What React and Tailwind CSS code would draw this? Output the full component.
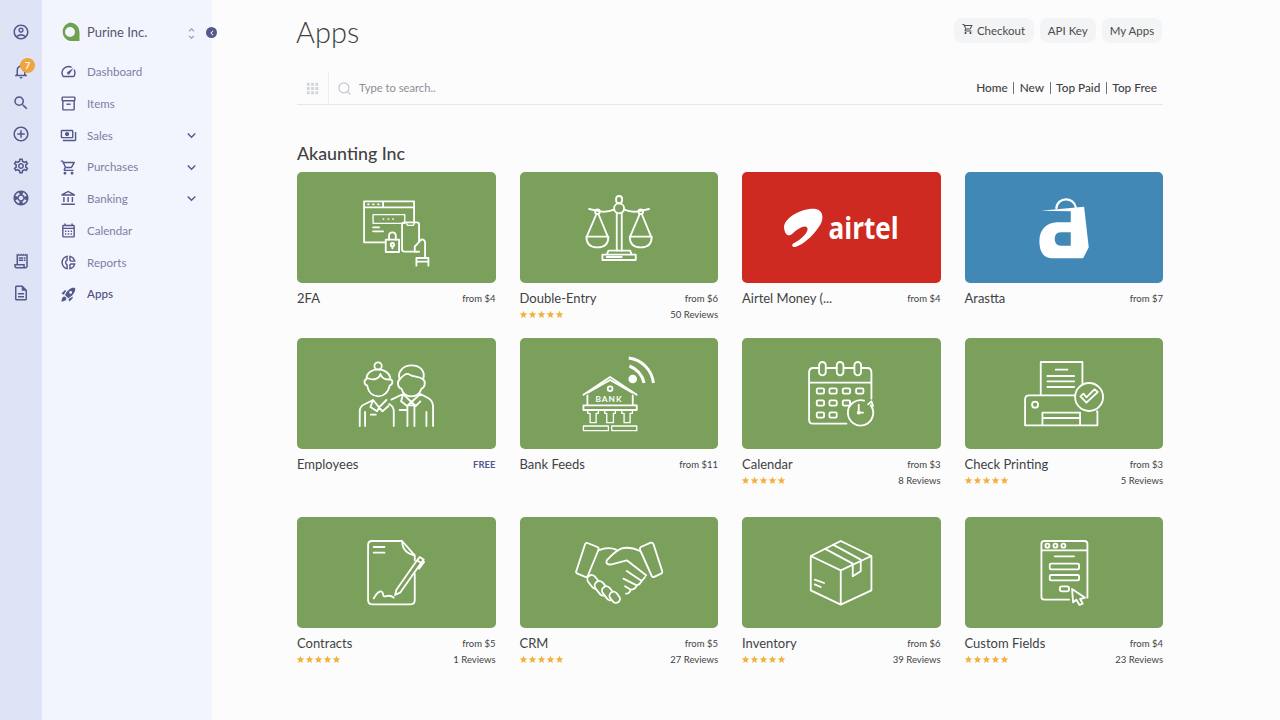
import {
  MdOutlineAccountCircle,
  MdOutlineNotifications,
  MdSearch,
  MdAddCircleOutline,
  MdOutlineSettings,
  MdOutlineSupport,
  MdOutlineReceiptLong,
  MdOutlineDescription,
  MdOutlineSpeed,
  MdOutlineInventory2,
  MdOutlinePayments,
  MdOutlineShoppingCart,
  MdOutlineAccountBalance,
  MdOutlineCalendarMonth,
  MdOutlineDonutSmall,
  MdRocketLaunch,
  MdExpandMore,
  MdChevronLeft,
  MdUnfoldMore,
  MdApps,
  MdStar,
} from "react-icons/md";
import { LuSearch } from "react-icons/lu";

const GREEN = "#7aa05c";

const railTop = [MdOutlineNotifications, MdSearch, MdAddCircleOutline, MdOutlineSettings, MdOutlineSupport];
const railBottom = [MdOutlineReceiptLong, MdOutlineDescription];

const navItems = [
  { label: "Dashboard", icon: MdOutlineSpeed },
  { label: "Items", icon: MdOutlineInventory2 },
  { label: "Sales", icon: MdOutlinePayments, more: true },
  { label: "Purchases", icon: MdOutlineShoppingCart, more: true },
  { label: "Banking", icon: MdOutlineAccountBalance, more: true },
  { label: "Calendar", icon: MdOutlineCalendarMonth },
  { label: "Reports", icon: MdOutlineDonutSmall },
  { label: "Apps", icon: MdRocketLaunch, active: true },
];

// every drawing uses the same 595x333 box, with its own origin
const Art = ({ box, children }) => (
  <svg
    viewBox={box}
    className="w-full h-full"
    fill="none"
    stroke="#fff"
    strokeWidth="5.5"
    strokeLinecap="round"
    strokeLinejoin="round"
  >
    {children}
  </svg>
);

const TwoFactor = () => (
  <Art box="22 4 595 333">
    <path d="M285 215H223V92H373V155M223 110H373M280 92V110" />
    <path d="M235 101h2M250 101h2M265 101h2" />
    <path d="M250 132H345V158H250ZM280 145h2M295 145h2M309 145h2" strokeWidth="4" />
    <path d="M250 170H268M250 182H280" />
    <rect x="337" y="155" width="51" height="88" rx="7" />
    <path d="M350 157l3 7h18l3-7" strokeWidth="4" />
    <path d="M298 207V194q0-9 10-9q10 0 10 9V207" />
    <rect x="288" y="207" width="40" height="37" />
    <circle cx="308" cy="222" r="5" />
    <path d="M308 227v6" />
    <path d="M388 243H375V228L395 206q11 0 11 11V262M380 262H416M380 262V285M416 262V285M380 273H416" fill={GREEN} />
  </Art>
);

const Scale = () => (
  <Art box="690 4 595 333">
    <rect x="978" y="76" width="18" height="22" rx="9" />
    <circle cx="987" cy="113" r="15" />
    <path d="M980 128V240M995 128V240" />
    <path d="M972 117Q950 126 930 122L897 115M1002 117Q1024 126 1044 122L1077 115" />
    <circle cx="922" cy="123" r="7" />
    <circle cx="1052" cy="123" r="7" />
    <path d="M919 130L890 198M925 130L953 198M1049 130L1020 198M1055 130L1083 198" />
    <path d="M889 198H955Q955 230 922 230Q889 230 889 198ZM1019 198H1085Q1085 230 1052 230Q1019 230 1019 198Z" />
    <path d="M950 252L955 240H1020L1025 252M937 252H1037V268H937ZM950 259H995" />
  </Art>
);

const Airtel = () => (
  <Art box="22 4 595 333">
    <path
      d="M148 172C145 145 195 113 238 114C268 116 270 148 250 172C232 198 205 222 182 229C170 231 170 220 178 217C205 203 222 182 218 172C213 160 190 172 172 190C160 200 150 190 148 172Z"
      fill="#fff"
      stroke="none"
    />
    <text
      x="281"
      y="206"
      fill="#fff"
      stroke="none"
      fontSize="92"
      fontWeight="700"
      textLength="211"
      lengthAdjust="spacingAndGlyphs"
      style={{ fontFamily: '"Open Sans", sans-serif' }}
    >
      airtel
    </text>
  </Art>
);

const Arastta = () => (
  <Art box="688 4 595 333">
    <path d="M962 112C965 78 1015 78 1020 110" strokeWidth="7" />
    <path
      fillRule="evenodd"
      fill="#fff"
      stroke="none"
      d="M915 120L1045 108L1059 230L1042 263H950C925 263 911 245 911 210C911 180 930 155 965 155H1005V122ZM1005 185H975C962 185 957 195 957 205C957 218 965 225 975 225H1005Z"
    />
  </Art>
);

const Employees = () => (
  <Art box="22 8 595 333">
    <circle cx="265" cy="92" r="11" />
    <path d="M232 150C222 148 222 132 230 132C230 112 248 102 265 102C285 102 302 115 302 132C310 133 310 148 300 150C296 172 280 183 266 183C250 183 236 172 232 150Z" />
    <path d="M232 128C250 136 268 132 272 116C276 128 288 134 302 132" />
    <path d="M210 272V228Q210 212 226 206L250 194L268 216L290 194M250 194L242 215L262 228L268 216L278 228L296 212M226 230V272M243 238H258M312 272V225Q310 212 298 206" />
    <path d="M335 160C325 158 320 140 330 132C322 112 338 90 365 90C392 90 408 108 400 132C410 140 404 158 395 160C390 175 378 183 365 183C352 183 340 175 335 160Z" />
    <path d="M330 132C342 118 352 112 360 118C372 126 388 122 400 132" />
    <path d="M305 193L340 176L365 200L392 176L415 188Q430 196 430 215V272M340 176L334 198L352 212L365 200L378 212L392 198M353 212V272M374 212V272M358 210L372 210M330 224H348M410 230V272" />
  </Art>
);

const BankFeeds = () => (
  <Art box="690 8 595 333">
    <circle cx="1028" cy="131" r="13" fill="#fff" stroke="none" />
    <path d="M1018 92A72 72 0 0 1 1062 143" strokeWidth="9" strokeLinecap="butt" />
    <path d="M1016 68A85 85 0 0 1 1090 143" strokeWidth="9" strokeLinecap="butt" />
    <path d="M880 178L960 125L1040 178M893 172L960 134L1027 172" />
    <circle cx="960" cy="160" r="7" />
    <text
      x="916"
      y="199"
      fill="#fff"
      stroke="none"
      fontSize="25"
      fontWeight="700"
      letterSpacing="3"
      style={{ fontFamily: '"Lato", sans-serif' }}
    >
      BANK
    </text>
    <path d="M892 180V208M1028 180V208M880 210H1040V224H880Z" />
    <path d="M893 224H925V234H918V262H900V234H893ZM944 224H976V234H970V262H950V234H944ZM995 224H1027V234H1020V262H1002V234H995Z" strokeWidth="4" />
    <path d="M880 272H955V286H880ZM965 272H1040V286H965Z" strokeWidth="4" />
  </Art>
);

const CalendarArt = () => (
  <Art box="22 8 595 333">
    <path d="M250 98H235Q223 98 223 112V253Q223 265 235 265H335M277 98H305M329 98H356M383 98H398Q410 98 410 112V190M223 142H410" />
    <rect x="253" y="80" width="20" height="40" rx="10" />
    <rect x="306" y="80" width="20" height="40" rx="10" />
    <rect x="359" y="80" width="20" height="40" rx="10" />
    {[257, 295, 335, 375].map((x) => (
      <rect key={x} x={x - 11} y="159" width="22" height="16" rx="4" />
    ))}
    {[257, 295, 335].map((x) => (
      <rect key={x} x={x - 11} y="195" width="22" height="16" rx="4" />
    ))}
    {[257, 295].map((x) => (
      <rect key={x} x={x - 11} y="231" width="22" height="16" rx="4" />
    ))}
    <path d="M408 210A38 38 0 1 1 388 196" fill={GREEN} />
    <path d="M400 207L410 198L415 212M372 208V232H385" />
    <circle cx="372" cy="232" r="3" fill="#fff" />
  </Art>
);

const CheckPrinting = () => (
  <Art box="688 8 595 333">
    <path d="M915 178V80H1040V150M1040 80V98" />
    <path d="M960 103H995M935 122H1015M935 138H1015M935 155H1015" />
    <path d="M1016 180H880Q868 180 868 192V270H1085V228H1083" />
    <circle cx="898" cy="208" r="9" />
    <path d="M920 270V232H1033V270M925 248H1030" />
    <circle cx="1060" cy="185" r="42" fill={GREEN} />
    <path d="M1034 183L1052 202L1086 170L1076 162L1052 186L1043 175Z" />
  </Art>
);

const Contracts = () => (
  <Art box="22 20 595 333">
    <path d="M337 92H247Q235 92 235 104V270Q235 282 247 282H363Q375 282 375 270V190M375 150V135L337 92Q338 128 375 135" />
    <path d="M252 110H284M252 127H284" />
    <path d="M252 264C265 240 278 238 280 252C282 268 295 246 312 262" />
    <path d="M316 254L320 238L382 150L394 158L332 246ZM382 150L390 140L402 148L394 158M388 175L403 155" />
  </Art>
);

const Handshake = () => (
  <Art box="690 20 595 333">
    <path d="M892 98L922 110Q928 113 925 119L893 197Q890 202 884 199L862 190Q856 187 859 181L885 102Q887 96 892 98Z" />
    <path d="M1082 97L1052 110Q1048 113 1050 119L1085 197Q1088 202 1094 199L1113 190Q1118 187 1116 181L1090 101Q1087 96 1082 97Z" />
    <path d="M925 120Q955 108 978 118M1050 122Q1020 108 995 114Q975 122 950 150Q945 165 965 162L1010 150L1068 195" />
    <path d="M1065 200L1055 212L1010 182M1055 212Q1050 222 1040 225L1000 205M1040 225Q1035 238 1022 238L1005 228M1022 238Q1018 250 1008 250" />
    <g fill={GREEN}>
      <rect x="898" y="192" width="26" height="46" rx="13" transform="rotate(-38 911 215)" />
      <rect x="920" y="210" width="28" height="48" rx="14" transform="rotate(-38 934 234)" />
      <rect x="942" y="226" width="26" height="46" rx="13" transform="rotate(-38 955 249)" />
      <rect x="962" y="243" width="24" height="36" rx="12" transform="rotate(-38 974 261)" />
    </g>
  </Art>
);

const Inventory = () => (
  <Art box="22 20 595 333">
    <path d="M318 92L410 137V240L318 283L228 240V137ZM228 137L318 180L410 137M318 180V283" />
    <path d="M270 115L354 160V198L378 183V148L295 103" />
    <path d="M240 208L268 218M240 222L258 230" />
  </Art>
);

const CustomFields = () => (
  <Art box="688 20 595 333">
    <path d="M1000 268H926Q917 268 917 260V100Q917 92 926 92H1046Q1055 92 1055 100V262M917 120H1055" />
    <circle cx="935" cy="106" r="6" />
    <circle cx="959" cy="106" r="6" />
    <circle cx="983" cy="106" r="6" />
    <path d="M957 138H1015" />
    <rect x="942" y="160" width="88" height="17" rx="4" />
    <rect x="942" y="194" width="88" height="16" rx="4" />
    <rect x="972" y="228" width="28" height="15" rx="7" />
    <path d="M1009 236L1048 262L1033 266L1041 280L1031 284L1022 268L1012 276Z" fill={GREEN} />
  </Art>
);

const rows = [
  {
    className: "grid grid-cols-4 gap-x-6 h-[166px]",
    apps: [
      { name: "2FA", price: "from $4", art: TwoFactor },
      { name: "Double-Entry", price: "from $6", reviews: "50 Reviews", art: Scale },
      { name: "Airtel Money (...", price: "from $4", art: Airtel, bg: "bg-[#cf2a22]" },
      { name: "Arastta", price: "from $7", art: Arastta, bg: "bg-[#4288b7]" },
    ],
  },
  {
    className: "grid grid-cols-4 gap-x-6 h-[179px]",
    apps: [
      { name: "Employees", free: true, art: Employees },
      { name: "Bank Feeds", price: "from $11", art: BankFeeds },
      { name: "Calendar", price: "from $3", reviews: "8 Reviews", art: CalendarArt },
      { name: "Check Printing", price: "from $3", reviews: "5 Reviews", art: CheckPrinting },
    ],
  },
  {
    className: "grid grid-cols-4 gap-x-6",
    apps: [
      { name: "Contracts", price: "from $5", reviews: "1 Reviews", art: Contracts },
      { name: "CRM", price: "from $5", reviews: "27 Reviews", art: Handshake },
      { name: "Inventory", price: "from $6", reviews: "39 Reviews", art: Inventory },
      { name: "Custom Fields", price: "from $4", reviews: "23 Reviews", art: CustomFields },
    ],
  },
];

const Stars = () => (
  <div className="flex -ml-[1px]">
    {[0, 1, 2, 3, 4].map((i) => (
      <MdStar key={i} className="w-[9px] h-[9px] text-[#f2b13c]" />
    ))}
  </div>
);

const AppCard = ({ app }) => {
  const Drawing = app.art;
  return (
    <div>
      <div className={`h-[111px] rounded-[5px] overflow-hidden ${app.bg || "bg-[#7aa05c]"}`}>
        <Drawing />
      </div>
      <div className="flex justify-between items-center mt-[7px] h-[18px]">
        <span className="text-[13px] text-[#424242]">{app.name}</span>
        {app.free ? (
          <span className="text-[9.5px] font-bold text-[#55588b]">FREE</span>
        ) : (
          <span className="text-[9.5px] text-[#424242]">{app.price}</span>
        )}
      </div>
      {app.reviews && (
        <div className="flex justify-between items-center h-[14px] -mt-[1px]">
          <Stars />
          <span className="text-[9.5px] text-[#424242] mt-[2px]">{app.reviews}</span>
        </div>
      )}
    </div>
  );
};

export default function App() {
  return (
    <div className="flex h-screen overflow-hidden bg-[#fcfcfd] font-['Lato',sans-serif]">
      <div className="w-[42px] shrink-0 bg-[#dee3f6] flex flex-col items-center pt-[22px] text-[#55588b]">
        <div className="h-[20px] mb-[19px] flex items-center">
          <MdOutlineAccountCircle size={18} />
        </div>
        {railTop.map((Icon, i) => (
          <div key={i} className="relative h-[20px] mb-[11.7px] flex items-center">
            <Icon size={18} />
            {i === 0 && (
              <span className="absolute -top-[3px] -right-[5px] w-[15px] h-[15px] rounded-full bg-[#f0a43c] text-white text-[9px] font-bold flex items-center justify-center">
                7
              </span>
            )}
          </div>
        ))}
        <div className="h-[31.7px]" />
        {railBottom.map((Icon, i) => (
          <div key={i} className="h-[20px] mb-[11.7px] flex items-center">
            <Icon size={18} />
          </div>
        ))}
      </div>

      <div className="relative w-[170px] shrink-0 bg-[#f2f5fd]">
        <div className="flex items-center h-[40px] mt-[13px] pl-[18px] pr-[13px]">
          <svg viewBox="0 0 20 20" className="w-[20px] h-[20px] mr-[7px] -mt-[2px]">
            <path
              fillRule="evenodd"
              fill="#6fa150"
              d="M10 0.5A9.5 9.5 0 0 1 19.5 10V19H10A9.5 9.5 0 0 1 10 0.5ZM10 5A5 5 0 1 0 10 15A5 5 0 0 0 10 5Z"
            />
          </svg>
          <span className="text-[13px] text-[#55566f] flex-1">Purine Inc.</span>
          <MdUnfoldMore size={15} className="text-[#a0a3b8]" />
        </div>
        <button className="absolute top-[27px] -right-[5px] w-[11px] h-[11px] rounded-full bg-[#55588b] flex items-center justify-center">
          <MdChevronLeft size={10} className="text-white" />
        </button>
        <div className="mt-[3px]">
          {navItems.map((item) => {
            const Icon = item.icon;
            return (
              <div key={item.label} className="flex items-center h-[31.75px] pl-[18px] pr-[12px]">
                <Icon size={17} className="text-[#55588b] w-[17px] mr-[10px]" />
                <span className={`text-[11.6px] flex-1 ${item.active ? "text-[#4b4e80] font-medium" : "text-[#7c7fa3]"}`}>
                  {item.label}
                </span>
                {item.more && <MdExpandMore size={17} className="text-[#55588b]" />}
              </div>
            );
          })}
        </div>
      </div>

      <div className="flex-1 pl-[85px] pr-[117px] pt-[18px]">
        <div className="flex justify-between items-center h-[25px]">
          <h1 className="text-[29px] font-light text-[#424242] leading-none -ml-[1px] mt-[2px]">Apps</h1>
          <div className="flex gap-[6.5px] mr-[1px] text-[11.5px] text-[#4b4b4b]">
            <button className="h-[25px] w-[80px] rounded-lg bg-[#f3f4f6] flex items-center justify-center gap-[3px]">
              <MdOutlineShoppingCart size={12} className="-mt-[3px]" />
              Checkout
            </button>
            <button className="h-[25px] w-[55.5px] rounded-lg bg-[#f3f4f6]">API Key</button>
            <button className="h-[25px] w-[60px] rounded-lg bg-[#f3f4f6]">My Apps</button>
          </div>
        </div>

        <div className="flex items-center h-[33px] mt-[29px] border-b border-[#e5e7eb]">
          <div className="w-[32px] h-full border-r border-[#eceef2] flex items-center justify-center">
            <MdApps size={17} className="text-[#d1d5db]" />
          </div>
          <LuSearch size={15} className="text-[#c4c7d0] ml-[8px]" />
          <span className="ml-[7px] text-[11.2px] text-[#8d8d94] flex-1">Type to search..</span>
          <div className="flex items-center text-[11.8px] font-medium text-[#424242] pr-[6px]">
            <span>Home</span>
            <span className="w-px h-[12px] bg-[#6b7280] mx-[5.5px]" />
            <span>New</span>
            <span className="w-px h-[12px] bg-[#6b7280] mx-[5.5px]" />
            <span>Top Paid</span>
            <span className="w-px h-[12px] bg-[#6b7280] mx-[5.5px]" />
            <span>Top Free</span>
          </div>
        </div>

        <h2 className="text-[17.8px] font-medium text-[#424242] mt-[35.5px] h-[31.5px] leading-[24px]">Akaunting Inc</h2>

        {rows.map((row, i) => (
          <div key={i} className={row.className}>
            {row.apps.map((app) => (
              <AppCard key={app.name} app={app} />
            ))}
          </div>
        ))}
      </div>
    </div>
  );
}
